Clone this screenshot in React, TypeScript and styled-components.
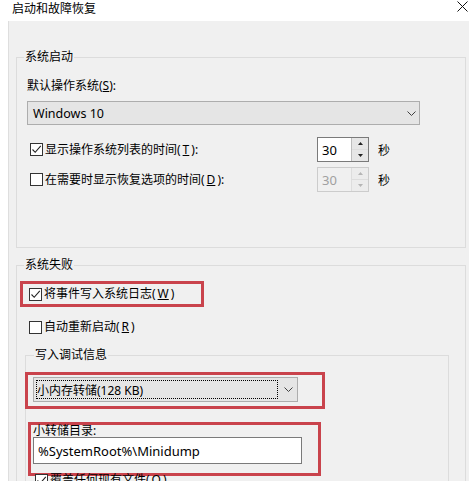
import React from "react";
import styled, { createGlobalStyle } from "styled-components";

const RED = "#c9434c";

const GlobalStyle = createGlobalStyle`
  html, body {
    margin: 0;
    padding: 0;
    background: #ffffff;
  }
  body {
    font-family: "Noto Sans", "Noto Sans CJK SC", sans-serif;
    font-size: 12px;
    color: #000000;
  }
`;

const Window = styled.div`
  width: 469px;
  height: 481px;
  overflow: hidden;
  background: #ffffff;
  display: flex;
  flex-direction: column;
`;

const TitleBar = styled.div`
  height: 21px;
  flex: none;
  display: flex;
  justify-content: space-between;
  align-items: flex-start;
  padding: 0 1px 0 12px;
  box-sizing: border-box;
`;

const Title = styled.span`
  line-height: 16px;
  font-family: "Noto Sans CJK SC", sans-serif;
`;

const CloseIcon = styled.svg`
  margin-top: 1px;
`;

const Panel = styled.div`
  flex: 1;
  margin-left: 8px;
  border-left: 1px solid #dedede;
  background: #f0f0f0;
  padding: 28px 3px 0 7px;
`;

const Group = styled.fieldset<{ $width: number; $pad: number; $bottom: number }>`
  margin: 0;
  min-width: 0;
  width: ${(p) => p.$width}px;
  box-sizing: border-box;
  border: 1px solid #dcdcdc;
  padding: 0 ${(p) => p.$pad}px ${(p) => p.$bottom}px ${(p) => p.$pad}px;
  display: flex;
  flex-direction: column;
  align-items: flex-start;
`;

const Legend = styled.legend<{ $offset: number }>`
  line-height: 16px;
  padding: 0 1px;
  margin-left: ${(p) => p.$offset}px;
  color: #000;
`;

const FieldLabel = styled.div<{ $top: number; $lh?: number }>`
  margin-top: ${(p) => p.$top}px;
  line-height: ${(p) => p.$lh ?? 16}px;
`;

const Combo = styled.div<{ $width: number; $height: number }>`
  width: ${(p) => p.$width}px;
  height: ${(p) => p.$height}px;
  box-sizing: border-box;
  border: 1px solid #adadad;
  background: #e5e5e5;
  display: flex;
  align-items: center;
  justify-content: space-between;
  flex: none;
`;

const MainCombo = styled(Combo)`
  margin-top: 7px;
  padding: 0 3px 0 5px;
  font-size: 12.5px;
`;

const DumpCombo = styled(Combo)`
  padding: 2px 4px 2px 2px;
`;

const FocusRect = styled.div`
  flex: 1;
  height: 100%;
  box-sizing: border-box;
  border: 1px dotted #000;
  display: flex;
  align-items: center;
  margin-right: 6px;
`;

const Chevron = styled.svg`
  flex: none;
`;

const SpinRow = styled.div<{ $top: number }>`
  margin-top: ${(p) => p.$top}px;
  height: 25px;
  display: flex;
  align-items: center;
`;

const CheckLine = styled.label<{ $pad?: number; $width?: number }>`
  display: flex;
  align-items: center;
  gap: 2px;
  padding-left: ${(p) => p.$pad ?? 0}px;
  width: ${(p) => (p.$width ? `${p.$width}px` : "auto")};
  box-sizing: border-box;
  line-height: 16px;
  flex: none;
`;

const Box = styled.span`
  width: 13px;
  height: 13px;
  box-sizing: border-box;
  border: 1px solid #333333;
  background: #ffffff;
  display: inline-flex;
  align-items: center;
  justify-content: center;
  flex: none;
`;

const Spin = styled.div<{ $disabled?: boolean }>`
  width: 52px;
  height: 25px;
  box-sizing: border-box;
  border: 1px solid ${(p) => (p.$disabled ? "#cccccc" : "#7a7a7a")};
  background: ${(p) => (p.$disabled ? "#f0f0f0" : "#ffffff")};
  color: ${(p) => (p.$disabled ? "#a0a0a0" : "#000000")};
  display: flex;
  flex: none;
`;

const SpinValue = styled.div`
  flex: 1;
  display: flex;
  align-items: center;
  padding-left: 4px;
  font-size: 13px;
`;

const SpinButtons = styled.div<{ $disabled?: boolean }>`
  width: 16px;
  display: flex;
  flex-direction: column;
  border-left: 1px solid ${(p) => (p.$disabled ? "#dddddd" : "#bdbdbd")};
`;

const SpinBtn = styled.div<{ $disabled?: boolean }>`
  flex: 1;
  display: flex;
  align-items: center;
  justify-content: center;
  background: ${(p) => (p.$disabled ? "#ececec" : "#e6e6e6")};
  & + & {
    border-top: 1px solid ${(p) => (p.$disabled ? "#dddddd" : "#c4c4c4")};
  }
`;

const Unit = styled.span`
  margin-left: 9px;
`;

const RedBox = styled.div<{ $left: number; $top: number; $width: number; $height: number }>`
  margin-left: ${(p) => p.$left}px;
  margin-top: ${(p) => p.$top}px;
  width: ${(p) => p.$width}px;
  height: ${(p) => p.$height}px;
  box-sizing: border-box;
  border: 3px solid ${RED};
  flex: none;
`;

const EventBox = styled(RedBox)`
  display: flex;
  align-items: center;
  padding-left: 6px;
`;

const ComboBox = styled(RedBox)`
  padding: 2px 0 0 5px;
`;

const DirBox = styled(RedBox)`
  display: flex;
  flex-direction: column;
  padding-left: 2px;
`;

const TextInput = styled.div`
  width: 269px;
  height: 27px;
  box-sizing: border-box;
  border: 1px solid #7a7a7a;
  background: #ffffff;
  display: flex;
  align-items: center;
  padding-left: 4px;
  font-size: 13px;
`;

const Spacer = styled.div<{ $top: number }>`
  margin-top: ${(p) => p.$top}px;
`;

const SubGroup = styled(Group)`
  margin: 12px 0 0 -2px;
`;

const FailGroup = styled(Group)`
  margin-top: 9px;
`;

function Check({ checked }: { checked?: boolean }) {
  return (
    <Box>
      {checked && (
        <svg width="11" height="11" viewBox="0 0 11 11">
          <path d="M1.5 5.5 L4.2 8.3 L9.8 1.8" fill="none" stroke="#222" strokeWidth="1.1" />
        </svg>
      )}
    </Box>
  );
}

function Down() {
  return (
    <Chevron width="9" height="5" viewBox="0 0 9 5">
      <path d="M0.5 0.5 L4.5 4.5 L8.5 0.5" fill="none" stroke="#404040" strokeWidth="1" />
    </Chevron>
  );
}

function Spinner({ value, disabled }: { value: string; disabled?: boolean }) {
  const c = disabled ? "#b5b5b5" : "#222";
  return (
    <Spin $disabled={disabled}>
      <SpinValue>{value}</SpinValue>
      <SpinButtons $disabled={disabled}>
        <SpinBtn $disabled={disabled}>
          <svg width="5" height="3" viewBox="0 0 5 3">
            <path d="M0 3 L2.5 0 L5 3 Z" fill={c} />
          </svg>
        </SpinBtn>
        <SpinBtn $disabled={disabled}>
          <svg width="5" height="3" viewBox="0 0 5 3">
            <path d="M0 0 L2.5 3 L5 0 Z" fill={c} />
          </svg>
        </SpinBtn>
      </SpinButtons>
    </Spin>
  );
}

export default function App() {
  return (
    <>
      <GlobalStyle />
      <Window>
        <TitleBar>
          <Title>启动和故障恢复</Title>
          <CloseIcon width="11" height="11" viewBox="0 0 11 11">
            <path d="M0.5 0.5 L10.5 10.5 M10.5 0.5 L0.5 10.5" stroke="#111" strokeWidth="1" />
          </CloseIcon>
        </TitleBar>
        <Panel>
          <Group $width={450} $pad={10} $bottom={55}>
            <Legend $offset={-3}>系统启动</Legend>
            <FieldLabel $top={13}>
              默认操作系统(<u>S</u>):
            </FieldLabel>
            <MainCombo $width={393} $height={24}>
              <span>Windows 10</span>
              <Down />
            </MainCombo>
            <SpinRow $top={12}>
              <CheckLine $pad={3} $width={290}>
                <Check checked />
                显示操作系统列表的时间(<u>T</u>):
              </CheckLine>
              <Spinner value="30" />
              <Unit>秒</Unit>
            </SpinRow>
            <SpinRow $top={5}>
              <CheckLine $pad={3} $width={290}>
                <Check />
                在需要时显示恢复选项的时间(<u>D</u>):
              </CheckLine>
              <Spinner value="30" disabled />
              <Unit>秒</Unit>
            </SpinRow>
          </Group>

          <FailGroup $width={450} $pad={10} $bottom={20}>
            <Legend $offset={-3}>系统失败</Legend>
            <EventBox $left={-7} $top={8} $width={184} $height={26}>
              <CheckLine>
                <Check checked />
                将事件写入系统日志(<u>W</u>)
              </CheckLine>
            </EventBox>
            <Spacer $top={12}>
              <CheckLine $pad={2}>
                <Check />
                自动重新启动(<u>R</u>)
              </CheckLine>
            </Spacer>
            <SubGroup $width={424} $pad={7} $bottom={30}>
              <Legend $offset={1}>写入调试信息</Legend>
              <ComboBox $left={-8} $top={9} $width={300} $height={37}>
                <DumpCombo $width={265} $height={25}>
                  <FocusRect>小内存转储(128 KB)</FocusRect>
                  <Down />
                </DumpCombo>
              </ComboBox>
              <DirBox $left={-5} $top={13} $width={293} $height={54}>
                <FieldLabel $top={0} $lh={12}>
                  小转储目录:
                </FieldLabel>
                <TextInput>%SystemRoot%\Minidump</TextInput>
              </DirBox>
              <Spacer $top={-4}>
                <CheckLine $pad={2}>
                  <Check checked />
                  覆盖任何现有文件(<u>O</u>)
                </CheckLine>
              </Spacer>
            </SubGroup>
          </FailGroup>
        </Panel>
      </Window>
    </>
  );
}
